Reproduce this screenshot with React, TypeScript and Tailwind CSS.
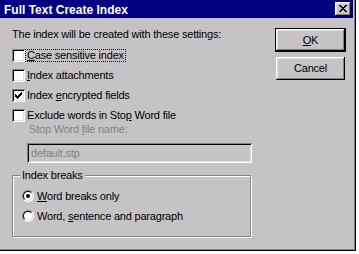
import React from "react";

const bevelOut =
  "shadow-[inset_-1px_-1px_0_#000,inset_1px_1px_0_#fff,inset_-2px_-2px_0_#848284,inset_2px_2px_0_#dfdfdf]";
const bevelIn =
  "shadow-[inset_1px_1px_0_#848284,inset_-1px_-1px_0_#fff,inset_2px_2px_0_#000,inset_-2px_-2px_0_#dfdfdf]";

function CheckBox({ checked }: { checked?: boolean }) {
  return (
    <div className={`relative w-[13px] h-[13px] shrink-0 bg-white ${bevelIn}`}>
      {checked && (
        <svg
          className="absolute left-[3px] top-[3px]"
          width="7"
          height="7"
          viewBox="0 0 7 7"
          shapeRendering="crispEdges"
        >
          <path
            fill="#000"
            d="M6 0h1v1h-1z M5 1h2v1h-2z M0 2h1v1h-1z M4 2h3v1h-3z M0 3h2v1h-2z M3 3h3v1h-3z M0 4h5v1h-5z M1 5h3v1h-3z M2 6h1v1h-1z"
          />
        </svg>
      )}
    </div>
  );
}

function Radio({ checked }: { checked?: boolean }) {
  return (
    <div className="w-[12px] h-[12px] shrink-0 rounded-full border border-t-[#848284] border-l-[#848284] border-b-white border-r-white">
      <div className="w-full h-full rounded-full border border-t-black border-l-black border-b-[#dfdfdf] border-r-[#dfdfdf] bg-white flex items-center justify-center">
        {checked && <div className="w-[4px] h-[4px] rounded-full bg-black" />}
      </div>
    </div>
  );
}

function CheckRow({
  checked,
  focus,
  children,
}: {
  checked?: boolean;
  focus?: boolean;
  children: React.ReactNode;
}) {
  return (
    <div className="flex items-center h-[13px]">
      <CheckBox checked={checked} />
      <span
        className={`px-[1px] h-[13px] leading-[11px] border ${
          focus ? "border-dotted border-black" : "border-transparent"
        }`}
      >
        {children}
      </span>
    </div>
  );
}

function RadioRow({
  checked,
  children,
}: {
  checked?: boolean;
  children: React.ReactNode;
}) {
  return (
    <div className="flex items-center h-[12px]">
      <Radio checked={checked} />
      <span className="ml-[1px] px-[1px] border border-transparent leading-[11px]">
        {children}
      </span>
    </div>
  );
}

export default function App() {
  return (
    <div className="w-[359px] h-[254px] bg-white overflow-hidden">
      <div
        className="w-[356px] h-[251px] bg-[#c6c3c6] shadow-[inset_-1px_-1px_0_#000,inset_-2px_-2px_0_#848284] text-[11px] leading-[13px] text-black font-['Liberation_Sans',Arial,sans-serif]"
      >
        {/* Title bar */}
        <div className="w-[353px] h-[18px] bg-[#000080] flex items-center justify-between pl-[4px] pr-[2px]">
          <span className="text-white font-bold text-[12px] leading-[14px] pt-[1px]">
            Full Text Create Index
          </span>
          <div
            className={`w-[16px] h-[14px] bg-[#c6c3c6] flex items-center justify-center ${bevelOut}`}
          >
            <svg
              width="8"
              height="7"
              viewBox="0 0 8 7"
              shapeRendering="crispEdges"
              className="-mt-[1px]"
            >
              <path
                fill="#000"
                d="M0 0h2v1h-2z M6 0h2v1h-2z M1 1h2v1h-2z M5 1h2v1h-2z M2 2h4v1h-4z M3 3h2v1h-2z M2 4h4v1h-4z M1 5h2v1h-2z M5 5h2v1h-2z M0 6h2v1h-2z M6 6h2v1h-2z"
              />
            </svg>
          </div>
        </div>

        {/* Body */}
        <div className="flex tracking-[-0.2px]">
          <div className="w-[275px] pl-[12px] pt-[10px] flex flex-col">
            <div className="h-[13px]">The index will be created with these settings:</div>

            <div className="mt-[8px] flex flex-col gap-[7px]">
              <CheckRow focus>
                <u>C</u>ase sensitive index
              </CheckRow>
              <CheckRow>
                <u>I</u>ndex attachments
              </CheckRow>
              <CheckRow checked>
                Index <u>e</u>ncrypted fields
              </CheckRow>
              <CheckRow>
                Exclude words in Sto<u>p</u> Word file
              </CheckRow>
            </div>

            <div className="mt-[1px] ml-[17px] h-[13px] text-[#848284]">
              Stop Word <u>f</u>ile name:
            </div>

            <div
              className={`mt-[7px] ml-[15px] w-[225px] h-[20px] flex items-center pl-[4px] text-[#848284] bg-[#c6c3c6] ${bevelIn}`}
            >
              default.stp
            </div>

            <div className="relative mt-[12px] w-[239px] border border-[#848284] shadow-[inset_1px_1px_0_#fff,1px_1px_0_#fff] pl-[9px] pt-[14px] pb-[14px] flex flex-col gap-[8px]">
              <span className="absolute top-[-7px] left-[7px] bg-[#c6c3c6] px-[2px] h-[13px]">
                Index breaks
              </span>
              <RadioRow checked>
                <u>W</u>ord breaks only
              </RadioRow>
              <RadioRow>
                Word, <u>s</u>entence and paragraph
              </RadioRow>
            </div>
          </div>

          <div className="pt-[10px] flex flex-col">
            <div className="w-[71px] h-[24px] border border-black">
              <div
                className={`w-full h-full bg-[#c6c3c6] flex items-center justify-center ${bevelOut}`}
              >
                <span>
                  <u>O</u>K
                </span>
              </div>
            </div>
            <div
              className={`mt-[5px] ml-[1px] w-[69px] h-[23px] bg-[#c6c3c6] flex items-center justify-center ${bevelOut}`}
            >
              Cancel
            </div>
          </div>
        </div>
      </div>
    </div>
  );
}
